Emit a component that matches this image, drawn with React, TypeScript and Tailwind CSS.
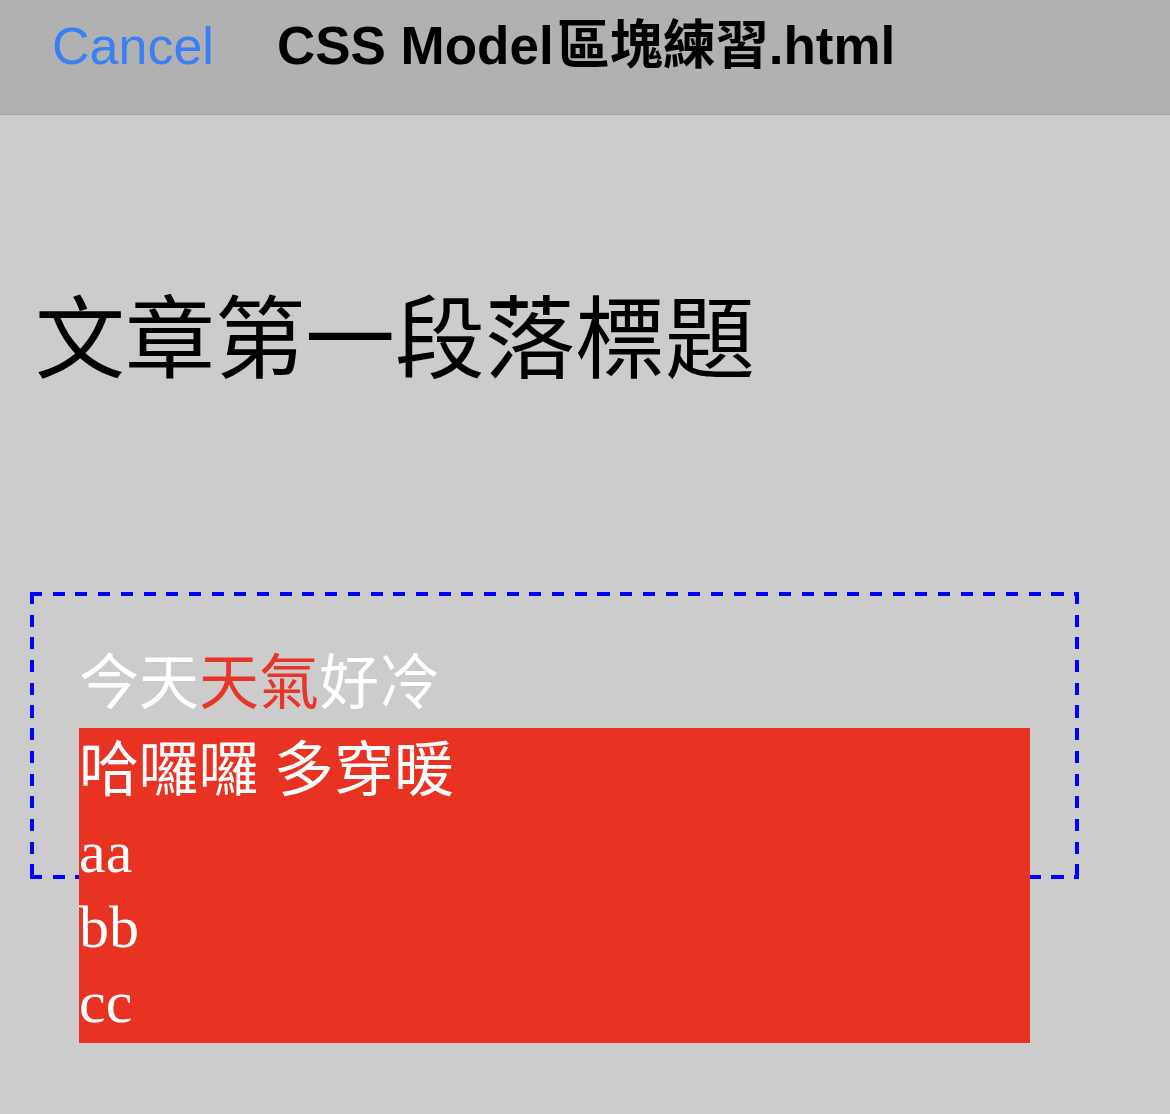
export default function App() {
  return (
    <div className="min-h-[1114px] w-full bg-[#cccccc] font-['Liberation_Serif','Noto_Sans_CJK_TC',serif] text-black">
      <header className="flex h-[115px] items-start gap-[63px] border-b border-[#a6a6a6] bg-[#b1b1b1] pl-[52px] pt-[16px] font-['Liberation_Sans','Noto_Sans_CJK_TC',sans-serif]">
        <span className="text-[52px] leading-[60px] text-[#3a7ff5]">Cancel</span>
        <span className="text-[53px] font-bold leading-[60px]">
          CSS Model<span className="ml-[3px]">區塊練習</span>.html
        </span>
      </header>

      <main>
        <h1 className="ml-[35px] mt-[172px] font-['Noto_Sans_CJK_TC',sans-serif] text-[90px] font-normal leading-[90px]">
          文章第一段落標題
        </h1>

        {/* dashed frame drawn with gradients so the dash length matches */}
        <section className="ml-[30px] mt-[215px] box-border h-[287px] w-[1049px] bg-[repeating-linear-gradient(90deg,#0000ff_0_12px,transparent_12px_22.7px),repeating-linear-gradient(90deg,#0000ff_0_12px,transparent_12px_22.7px),repeating-linear-gradient(180deg,#0000ff_0_12px,transparent_12px_22.7px),repeating-linear-gradient(180deg,#0000ff_0_12px,transparent_12px_22.7px)] bg-[length:100%_4px,100%_4px,4px_100%,4px_100%] bg-[position:0_0,0_100%,0_0,100%_0] bg-no-repeat px-[49px] pt-[49px]">
          <p className="text-[60px] leading-[87px] text-white">
            今天<span className="text-[#e8352a]">天氣</span>好冷
          </p>
          <div className="bg-[#e83323] pb-[3px] text-white">
            <p className="text-[60px] leading-[87px]">哈囉囉 多穿暖</p>
            <p className="text-[60px] leading-[75px]">aa</p>
            <p className="text-[60px] leading-[75px]">bb</p>
            <p className="text-[60px] leading-[75px]">cc</p>
          </div>
        </section>
      </main>
    </div>
  )
}
